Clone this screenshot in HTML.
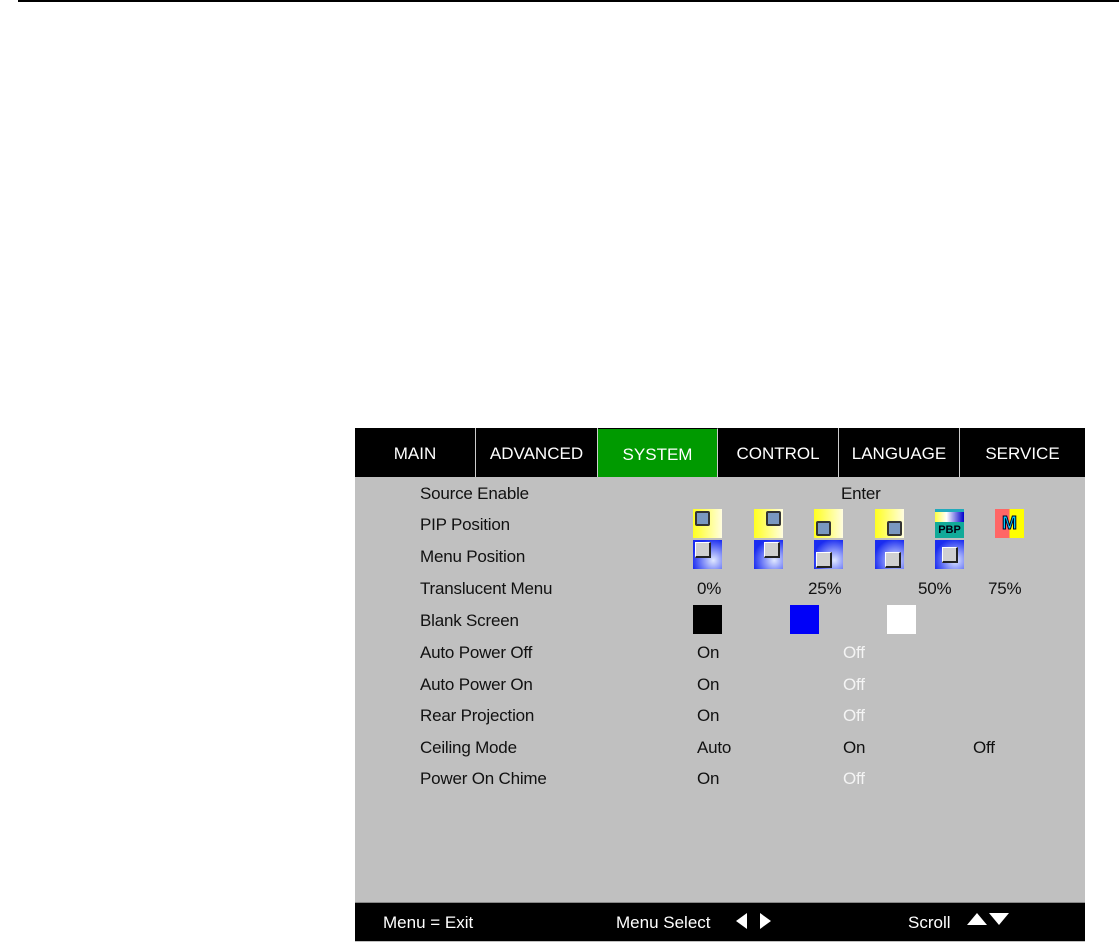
<!DOCTYPE html>
<html><head><style>
body{margin:0;width:1119px;height:945px;background:#fff;position:relative;overflow:hidden;font-family:"Liberation Sans",sans-serif;}
.a{position:absolute;white-space:nowrap}
#p{position:absolute;left:355px;top:428px;width:730px;height:514px;background:#c0c0c0;}
.tab{position:absolute;top:0;height:49px;background:#000;color:#fff;font-size:17px;line-height:52px;text-align:center;border-right:1px solid #ccc;box-sizing:border-box}
.t{position:absolute;font-size:17px;color:#111;white-space:nowrap;line-height:18px;letter-spacing:-0.2px}
.w{color:#f4f4f4}
.pi{position:absolute;width:29px;height:29px;background:linear-gradient(90deg,#ffff20,#fffde0);}
.pi i{position:absolute;width:11px;height:11px;background:#7a98c0;border:2px solid #333;border-radius:2px}
.mi{position:absolute;width:29px;height:29px;background:radial-gradient(circle at 70% 70%,#e0e8ff,#1a2cf0 75%);}
.mi i{position:absolute;width:13px;height:13px;background:#d0d0d0;border:1px solid #fff;border-right:2px solid #222;border-bottom:2px solid #222}
</style></head><body>
<div class="a" style="left:18px;top:0;width:1101px;height:2px;background:#000"></div>
<div id="p">
<div class="tab" style="left:0;width:121px">MAIN</div>
<div class="tab" style="left:121px;width:122px">ADVANCED</div>
<div class="tab" style="left:243px;width:120px;background:#009a00;border-top:1px solid #000">SYSTEM</div>
<div class="tab" style="left:363px;width:121px">CONTROL</div>
<div class="tab" style="left:484px;width:121px">LANGUAGE</div>
<div class="tab" style="left:605px;width:125px;border-right:none">SERVICE</div>
</div>
<div class="t" style="left:420px;top:485px">Source Enable</div>
<div class="t" style="left:841px;top:485px">Enter</div>
<div class="t" style="left:420px;top:516px">PIP Position</div>
<div class="t" style="left:420px;top:548px">Menu Position</div>
<div class="t" style="left:420px;top:580px">Translucent Menu</div>
<div class="t" style="left:697px;top:580px">0%</div>
<div class="t" style="left:808px;top:580px">25%</div>
<div class="t" style="left:918px;top:580px">50%</div>
<div class="t" style="left:988px;top:580px">75%</div>
<div class="t" style="left:420px;top:612px">Blank Screen</div>
<div class="a" style="left:693px;top:605px;width:29px;height:29px;background:#000"></div>
<div class="a" style="left:790px;top:605px;width:29px;height:29px;background:#0000f8"></div>
<div class="a" style="left:887px;top:605px;width:29px;height:29px;background:#fff"></div>
<div class="t" style="left:420px;top:644px">Auto Power Off</div><div class="t" style="left:697px;top:644px">On</div><div class="t w" style="left:843px;top:644px">Off</div>
<div class="t" style="left:420px;top:676px">Auto Power On</div><div class="t" style="left:697px;top:676px">On</div><div class="t w" style="left:843px;top:676px">Off</div>
<div class="t" style="left:420px;top:707px">Rear Projection</div><div class="t" style="left:697px;top:707px">On</div><div class="t w" style="left:843px;top:707px">Off</div>
<div class="t" style="left:420px;top:739px">Ceiling Mode</div><div class="t" style="left:697px;top:739px">Auto</div><div class="t" style="left:843px;top:739px">On</div><div class="t" style="left:973px;top:739px">Off</div>
<div class="t" style="left:420px;top:770px">Power On Chime</div><div class="t" style="left:697px;top:770px">On</div><div class="t w" style="left:843px;top:770px">Off</div>

<div class="pi" style="left:693px;top:509px"><i style="left:2px;top:2px"></i></div>
<div class="pi" style="left:754px;top:509px"><i style="right:2px;top:2px"></i></div>
<div class="pi" style="left:814px;top:509px"><i style="left:2px;bottom:2px"></i></div>
<div class="pi" style="left:875px;top:509px"><i style="right:2px;bottom:2px"></i></div>
<div class="a" style="left:935px;top:509px;width:29px;height:29px;background:linear-gradient(#2ab 0 3px,transparent 3px),linear-gradient(90deg,#ffff40,#fff 40%,#00c);"><div class="a" style="left:0;top:13px;width:29px;height:16px;background:#1a9;color:#001;font:bold 11px/16px 'Liberation Sans',sans-serif;text-align:center">PBP</div></div>
<div class="a" style="left:995px;top:509px;width:29px;height:29px;background:linear-gradient(90deg,#f66 50%,#ff0 50%);color:#0cf;font:bold 18px/29px 'Liberation Sans',sans-serif;text-align:center;-webkit-text-stroke:1px #002">M</div>

<div class="mi" style="left:693px;top:540px"><i style="left:2px;top:2px"></i></div>
<div class="mi" style="left:754px;top:540px"><i style="right:3px;top:2px"></i></div>
<div class="mi" style="left:814px;top:540px"><i style="left:2px;bottom:1px"></i></div>
<div class="mi" style="left:875px;top:540px"><i style="right:3px;bottom:1px"></i></div>
<div class="mi" style="left:935px;top:540px"><i style="left:7px;top:7px"></i></div>

<div class="a" style="left:355px;top:902px;width:730px;height:38px;background:#000;border-top:1px solid #888"></div>
<div class="a" style="left:383px;top:913px;color:#fff;font-size:17px">Menu = Exit</div>
<div class="a" style="left:616px;top:913px;color:#fff;font-size:17px">Menu Select</div>
<svg class="a" style="left:735px;top:911px" width="40" height="20"><polygon points="1,10 12,2 12,18" fill="#fff"/><polygon points="26,2 37,10 26,18" fill="#fff" transform="translate(-1,0)"/></svg>
<div class="a" style="left:908px;top:913px;color:#fff;font-size:17px">Scroll</div>
<svg class="a" style="left:965px;top:911px" width="50" height="16"><polygon points="2,14 12,2 22,14" fill="#fff"/><polygon points="24,2 44,2 34,14" fill="#fff"/></svg>
</body></html>
